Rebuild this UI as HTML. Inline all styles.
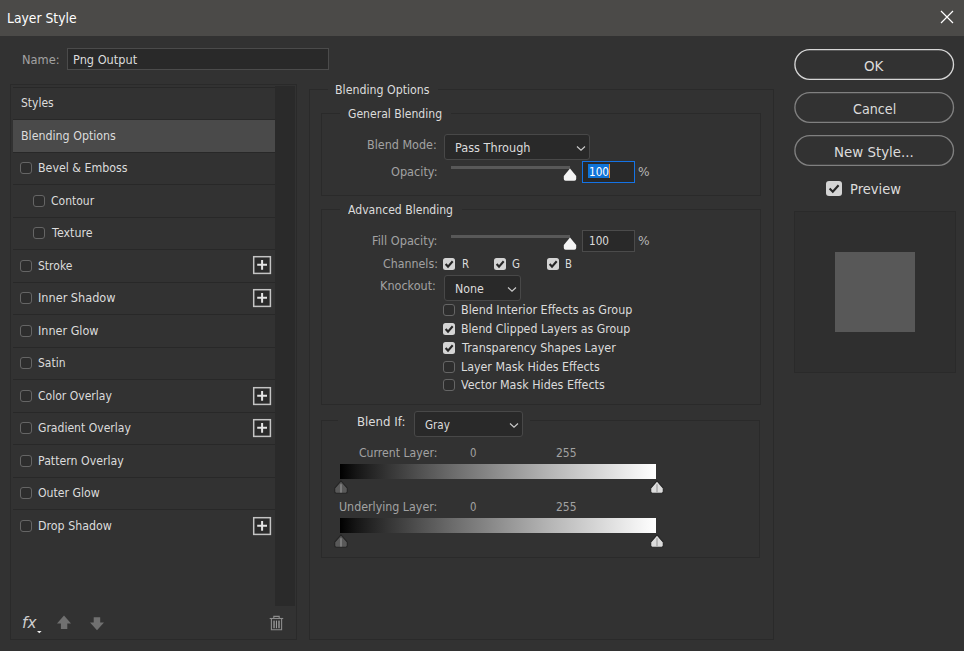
<!DOCTYPE html>
<html>
<head>
<meta charset="utf-8">
<title>Layer Style</title>
<style>
*{box-sizing:border-box;margin:0;padding:0}
html,body{width:964px;height:651px;overflow:hidden;background:#323232}
body{position:relative;font-family:"DejaVu Sans","Liberation Sans",sans-serif;font-size:13px;color:#dcdcdc}
.a{position:absolute}
.t{position:absolute;white-space:pre;line-height:16px;transform-origin:0 50%}
.ln{position:absolute;background:#282828}
.cb{position:absolute;width:12px;height:12px;border:1px solid #656565;border-radius:3px;background:#2d2d2d}
.cc{position:absolute;width:12px;height:12px;border-radius:2.5px;background:#d4d4d4}
.cc svg{position:absolute;left:0;top:0}
.sel{position:absolute;background:#292929;border:1px solid #484848;border-radius:3px}
.inp{position:absolute;background:#292929;border:1px solid #4b4b4b}
.fs{position:absolute;border:1px solid #2a2a2a}
.gap{position:absolute;height:3px;background:#323232}
.trk{position:absolute;height:3px;background:#585858}
.grad{position:absolute;left:340px;width:316px;height:15px;background:linear-gradient(to right,#000000 0%,#151515 5%,#252525 10%,#343434 15%,#424242 20%,#505050 25%,#5d5d5d 30%,#6a6a6a 35%,#767676 40%,#828282 45%,#8e8e8e 50%,#9a9a9a 55%,#a6a6a6 60%,#b2b2b2 65%,#bdbdbd 70%,#c8c8c8 75%,#d3d3d3 80%,#dedede 85%,#e9e9e9 90%,#f4f4f4 95%,#ffffff 100%)}
</style>
</head>
<body>
<!-- title bar -->
<div class="a" style="left:0;top:0;width:964px;height:36px;background:#4b4a48"></div>
<svg class="a" style="left:938px;top:8px" width="18" height="18" viewBox="0 0 18 18"><path d="M3 3 L15 15 M15 3 L3 15" stroke="#ffffff" stroke-width="1.2" fill="none"/></svg>

<!-- name field -->
<div class="inp" style="left:67px;top:48px;width:262px;height:22px;border-color:#4b4b4b"></div>

<!-- left panel -->
<div class="fs" style="left:10px;top:84px;width:287px;height:556px"></div>
<div class="a" style="left:275px;top:86px;width:20px;height:520px;background:#2a2a2a"></div>
<div class="a" style="left:13px;top:120px;width:262px;height:32px;background:#4a4a4a"></div>
<div class="ln" style="left:13px;top:87px;width:262px;height:1px"></div>
<div class="ln" style="left:13px;top:119px;width:262px;height:1px"></div>
<div class="ln" style="left:13px;top:152px;width:262px;height:1px"></div>
<div class="ln" style="left:13px;top:184px;width:262px;height:1px"></div>
<div class="ln" style="left:13px;top:217px;width:262px;height:1px"></div>
<div class="ln" style="left:13px;top:249px;width:262px;height:1px"></div>
<div class="ln" style="left:13px;top:282px;width:262px;height:1px"></div>
<div class="ln" style="left:13px;top:314px;width:262px;height:1px"></div>
<div class="ln" style="left:13px;top:347px;width:262px;height:1px"></div>
<div class="ln" style="left:13px;top:379px;width:262px;height:1px"></div>
<div class="ln" style="left:13px;top:412px;width:262px;height:1px"></div>
<div class="ln" style="left:13px;top:444px;width:262px;height:1px"></div>
<div class="ln" style="left:13px;top:477px;width:262px;height:1px"></div>
<div class="ln" style="left:13px;top:509px;width:262px;height:1px"></div>
<div class="cb" style="left:20px;top:161.5px"></div>
<div class="cb" style="left:33px;top:194.5px"></div>
<div class="cb" style="left:33px;top:226.5px"></div>
<div class="cb" style="left:20px;top:259.5px"></div>
<div class="cb" style="left:20px;top:291.5px"></div>
<div class="cb" style="left:20px;top:324.5px"></div>
<div class="cb" style="left:20px;top:356.5px"></div>
<div class="cb" style="left:20px;top:389.5px"></div>
<div class="cb" style="left:20px;top:421.5px"></div>
<div class="cb" style="left:20px;top:454.5px"></div>
<div class="cb" style="left:20px;top:486.5px"></div>
<div class="cb" style="left:20px;top:519.5px"></div>
<svg class="a" style="left:252px;top:255px" width="20" height="20" viewBox="0 0 20 20"><rect x="1.7" y="1.7" width="16.7" height="16.7" fill="#2b2b2b" stroke="#c4c4c4" stroke-width="1.5"/><path d="M5.2 9.8 H15 M10.1 4.9 V14.7" stroke="#e4e4e4" stroke-width="2" fill="none"/></svg>
<svg class="a" style="left:252px;top:288px" width="20" height="20" viewBox="0 0 20 20"><rect x="1.7" y="1.7" width="16.7" height="16.7" fill="#2b2b2b" stroke="#c4c4c4" stroke-width="1.5"/><path d="M5.2 9.8 H15 M10.1 4.9 V14.7" stroke="#e4e4e4" stroke-width="2" fill="none"/></svg>
<svg class="a" style="left:252px;top:385.5px" width="20" height="20" viewBox="0 0 20 20"><rect x="1.7" y="1.7" width="16.7" height="16.7" fill="#2b2b2b" stroke="#c4c4c4" stroke-width="1.5"/><path d="M5.2 9.8 H15 M10.1 4.9 V14.7" stroke="#e4e4e4" stroke-width="2" fill="none"/></svg>
<svg class="a" style="left:252px;top:418px" width="20" height="20" viewBox="0 0 20 20"><rect x="1.7" y="1.7" width="16.7" height="16.7" fill="#2b2b2b" stroke="#c4c4c4" stroke-width="1.5"/><path d="M5.2 9.8 H15 M10.1 4.9 V14.7" stroke="#e4e4e4" stroke-width="2" fill="none"/></svg>
<svg class="a" style="left:252px;top:515.5px" width="20" height="20" viewBox="0 0 20 20"><rect x="1.7" y="1.7" width="16.7" height="16.7" fill="#2b2b2b" stroke="#c4c4c4" stroke-width="1.5"/><path d="M5.2 9.8 H15 M10.1 4.9 V14.7" stroke="#e4e4e4" stroke-width="2" fill="none"/></svg>

<!-- bottom-left icons -->
<div class="t" style="left:22.3px;top:612.6px;font-size:15px;font-style:italic;color:#cecece;line-height:20px;transform:scaleX(1.02)">fx</div>
<svg class="a" style="left:36px;top:630px" width="8" height="5" viewBox="0 0 8 5"><path d="M1 1 H5.6 L3.3 3.2 Z" fill="#f0f0f0"/></svg>
<svg class="a" style="left:56px;top:614px" width="16" height="17" viewBox="0 0 16 17"><path d="M8 1.5 L15 9.4 H11.3 V15 H4.9 V9.4 H1 Z" fill="#707070"/></svg>
<svg class="a" style="left:89px;top:616px" width="16" height="16" viewBox="0 0 16 16"><path d="M4.7 1.2 H11.2 V6.4 H15 L8 14.2 L1 6.4 H4.7 Z" fill="#707070"/></svg>
<svg class="a" style="left:268px;top:614px" width="17" height="18" viewBox="0 0 17 18"><g fill="none" stroke="#8c8c8c" stroke-width="1.1"><path d="M1.7 4.5 H15.2"/><path d="M5.8 4.3 V2.4 H11.2 V4.3"/><path d="M3.4 5 V15.7 H13.6 V5"/></g><rect x="5.1" y="6.6" width="2" height="7.6" fill="#7a7a7a"/><rect x="8" y="6.6" width="1" height="7.6" fill="#9a9a9a"/><rect x="10" y="6.6" width="2" height="7.6" fill="#7a7a7a"/></svg>

<!-- center fieldsets -->
<div class="fs" style="left:309px;top:89px;width:465px;height:551px"></div>
<div class="gap" style="left:328px;top:88px;width:110px"></div>
<div class="fs" style="left:321px;top:113px;width:440px;height:83px"></div>
<div class="gap" style="left:340px;top:112px;width:111px"></div>
<div class="fs" style="left:321px;top:209px;width:440px;height:196px"></div>
<div class="gap" style="left:340px;top:208px;width:122px"></div>
<div class="fs" style="left:321px;top:420px;width:439px;height:138px"></div>
<div class="gap" style="left:338px;top:419px;width:192px"></div>

<!-- general blending -->
<div class="sel" style="left:444px;top:134px;width:146px;height:26px"></div>
<svg class="a" style="left:575px;top:144px" width="12" height="9" viewBox="0 0 12 9"><path d="M2 2.5 L6 6.2 L10 2.5" stroke="#cdcdcd" stroke-width="1.1" fill="none"/></svg>
<div class="trk" style="left:451px;top:166px;width:119px"></div>
<svg class="a" style="left:563px;top:168.4px" width="14" height="14" viewBox="0 0 14 14"><path d="M7 0.6 L13.2 8 V11 Q13.2 12.8 11.4 12.8 H2.6 Q0.8 12.8 0.8 11 V8 Z" fill="#f4f4f4"/></svg>
<div class="inp" style="left:582px;top:161px;width:53px;height:22px;border-color:#1473e6"></div>
<div class="a" style="left:588px;top:164px;width:21px;height:14px;background:#0f74d8"></div>
<div class="a" style="left:609px;top:164px;width:1px;height:14px;background:#f08a1e"></div>

<!-- advanced blending -->
<div class="trk" style="left:451px;top:235px;width:119px"></div>
<svg class="a" style="left:563px;top:237.4px" width="14" height="14" viewBox="0 0 14 14"><path d="M7 0.6 L13.2 8 V11 Q13.2 12.8 11.4 12.8 H2.6 Q0.8 12.8 0.8 11 V8 Z" fill="#f4f4f4"/></svg>
<div class="inp" style="left:582px;top:230px;width:53px;height:22px"></div>
<div class="cc" style="left:442.6px;top:257.8px"><svg width="12" height="12" viewBox="0 0 12 12"><path d="M2.6 6.1 L5 8.6 L9.7 3.3" stroke="#262626" stroke-width="2.1" fill="none"/></svg></div>
<div class="cc" style="left:493.8px;top:257.8px"><svg width="12" height="12" viewBox="0 0 12 12"><path d="M2.6 6.1 L5 8.6 L9.7 3.3" stroke="#262626" stroke-width="2.1" fill="none"/></svg></div>
<div class="cc" style="left:546.5px;top:257.8px"><svg width="12" height="12" viewBox="0 0 12 12"><path d="M2.6 6.1 L5 8.6 L9.7 3.3" stroke="#262626" stroke-width="2.1" fill="none"/></svg></div>
<div class="cc" style="left:442.8px;top:323.3px"><svg width="12" height="12" viewBox="0 0 12 12"><path d="M2.6 6.1 L5 8.6 L9.7 3.3" stroke="#262626" stroke-width="2.1" fill="none"/></svg></div>
<div class="cc" style="left:442.8px;top:342px"><svg width="12" height="12" viewBox="0 0 12 12"><path d="M2.6 6.1 L5 8.6 L9.7 3.3" stroke="#262626" stroke-width="2.1" fill="none"/></svg></div>
<div class="cb" style="left:442.8px;top:304px"></div>
<div class="cb" style="left:442.8px;top:361px"></div>
<div class="cb" style="left:442.8px;top:379px"></div>
<div class="sel" style="left:444px;top:275px;width:77px;height:26px"></div>
<svg class="a" style="left:506px;top:285px" width="12" height="9" viewBox="0 0 12 9"><path d="M2 2.5 L6 6.2 L10 2.5" stroke="#cdcdcd" stroke-width="1.1" fill="none"/></svg>

<!-- blend if -->
<div class="sel" style="left:414px;top:411px;width:109px;height:26px"></div>
<svg class="a" style="left:508px;top:421px" width="12" height="9" viewBox="0 0 12 9"><path d="M2 2.5 L6 6.2 L10 2.5" stroke="#cdcdcd" stroke-width="1.1" fill="none"/></svg>
<div class="grad" style="top:464px"></div>
<div class="grad" style="top:518px"></div>
<svg class="a" style="left:334px;top:479.6px" width="14" height="15" viewBox="0 0 14 15"><path d="M7 0.9 L13.3 8.2 V11.6 Q13.3 13.3 11.7 13.3 H2.3 Q0.7 13.3 0.7 11.6 V8.2 Z" fill="#595959" stroke="#242424" stroke-width="1.1"/><rect x="6.25" y="4.2" width="1.5" height="8.4" fill="#868686"/></svg>
<svg class="a" style="left:650.2px;top:479.7px" width="14" height="15" viewBox="0 0 14 15"><path d="M7 0.9 L13.3 8.2 V11.6 Q13.3 13.3 11.7 13.3 H2.3 Q0.7 13.3 0.7 11.6 V8.2 Z" fill="#dcdcdc" stroke="#242424" stroke-width="1.1"/><rect x="6.35" y="4.2" width="1.3" height="8.4" fill="#a4a4a4"/></svg>
<svg class="a" style="left:334px;top:533.6px" width="14" height="15" viewBox="0 0 14 15"><path d="M7 0.9 L13.3 8.2 V11.6 Q13.3 13.3 11.7 13.3 H2.3 Q0.7 13.3 0.7 11.6 V8.2 Z" fill="#595959" stroke="#242424" stroke-width="1.1"/><rect x="6.25" y="4.2" width="1.5" height="8.4" fill="#868686"/></svg>
<svg class="a" style="left:650.2px;top:533.7px" width="14" height="15" viewBox="0 0 14 15"><path d="M7 0.9 L13.3 8.2 V11.6 Q13.3 13.3 11.7 13.3 H2.3 Q0.7 13.3 0.7 11.6 V8.2 Z" fill="#dcdcdc" stroke="#242424" stroke-width="1.1"/><rect x="6.35" y="4.2" width="1.3" height="8.4" fill="#a4a4a4"/></svg>

<!-- right column -->
<svg class="a" style="left:790px;top:44px" width="170" height="128" viewBox="0 0 170 128"><g fill="none" stroke-width="1.35"><rect x="4.9" y="5.65" width="158.6" height="29.7" rx="14.85" stroke="#d6d6d6"/><rect x="4.9" y="48.65" width="158.6" height="29.7" rx="14.85" stroke="#808080"/><rect x="4.9" y="91.65" width="158.6" height="29.7" rx="14.85" stroke="#808080"/></g></svg>
<div class="a" style="left:826px;top:181px;width:16px;height:15px;border-radius:3px;background:#d4d4d4"></div>
<svg class="a" style="left:826px;top:181px" width="16" height="15" viewBox="0 0 16 15"><path d="M3.6 7.6 L6.8 10.8 L12.6 4.2" stroke="#262626" stroke-width="2.1" fill="none"/></svg>
<div class="fs" style="left:794px;top:211px;width:162px;height:162px;background:#2f2f2f"></div>
<div class="a" style="left:835px;top:252px;width:80px;height:80px;background:#585858"></div>

<div class="t" style="left:7.00px;top:9.89px;font-size:14.2px;color:#ffffff;transform:scaleX(0.8720)">Layer Style</div>
<div class="t" style="left:22.30px;top:51.90px;font-size:13px;color:#a2a2a2;transform:scaleX(0.8775)">Name:</div>
<div class="t" style="left:72.80px;top:51.90px;font-size:13px;color:#dcdcdc;transform:scaleX(0.8732)">Png Output</div>
<div class="t" style="left:21.10px;top:95.20px;font-size:13px;color:#dcdcdc;transform:scaleX(0.8292)">Styles</div>
<div class="t" style="left:21.10px;top:127.70px;font-size:13px;color:#dcdcdc;transform:scaleX(0.8517)">Blending Options</div>
<div class="t" style="left:38.20px;top:160.00px;font-size:13px;color:#dcdcdc;transform:scaleX(0.8502)">Bevel &amp; Emboss</div>
<div class="t" style="left:51.40px;top:192.70px;font-size:13px;color:#dcdcdc;transform:scaleX(0.8303)">Contour</div>
<div class="t" style="left:52.20px;top:225.00px;font-size:13px;color:#dcdcdc;transform:scaleX(0.8531)">Texture</div>
<div class="t" style="left:38.20px;top:257.80px;font-size:13px;color:#dcdcdc;transform:scaleX(0.8302)">Stroke</div>
<div class="t" style="left:37.50px;top:290.00px;font-size:13px;color:#dcdcdc;transform:scaleX(0.8699)">Inner Shadow</div>
<div class="t" style="left:37.50px;top:322.80px;font-size:13px;color:#dcdcdc;transform:scaleX(0.8635)">Inner Glow</div>
<div class="t" style="left:38.20px;top:355.00px;font-size:13px;color:#dcdcdc;transform:scaleX(0.8290)">Satin</div>
<div class="t" style="left:38.20px;top:387.70px;font-size:13px;color:#dcdcdc;transform:scaleX(0.8339)">Color Overlay</div>
<div class="t" style="left:38.20px;top:419.80px;font-size:13px;color:#dcdcdc;transform:scaleX(0.8349)">Gradient Overlay</div>
<div class="t" style="left:38.20px;top:452.70px;font-size:13px;color:#dcdcdc;transform:scaleX(0.8447)">Pattern Overlay</div>
<div class="t" style="left:38.20px;top:484.70px;font-size:13px;color:#dcdcdc;transform:scaleX(0.8414)">Outer Glow</div>
<div class="t" style="left:38.20px;top:517.70px;font-size:13px;color:#dcdcdc;transform:scaleX(0.8523)">Drop Shadow</div>
<div class="t" style="left:335.00px;top:82.00px;font-size:13px;color:#dcdcdc;transform:scaleX(0.8490)">Blending Options</div>
<div class="t" style="left:347.90px;top:105.90px;font-size:13px;color:#dcdcdc;transform:scaleX(0.8364)">General Blending</div>
<div class="t" style="left:367.30px;top:137.00px;font-size:13px;color:#a2a2a2;transform:scaleX(0.8610)">Blend Mode:</div>
<div class="t" style="left:454.90px;top:139.50px;font-size:13px;color:#dcdcdc;transform:scaleX(0.8695)">Pass Through</div>
<div class="t" style="left:390.50px;top:163.90px;font-size:13px;color:#a2a2a2;transform:scaleX(0.8702)">Opacity:</div>
<div class="t" style="left:588.70px;top:163.70px;font-size:13px;color:#ffffff;transform:scaleX(0.8055)">100</div>
<div class="t" style="left:637.50px;top:163.70px;font-size:13px;color:#b6b6b6;transform:scaleX(0.9386)">%</div>
<div class="t" style="left:347.90px;top:202.00px;font-size:13px;color:#dcdcdc;transform:scaleX(0.8369)">Advanced Blending</div>
<div class="t" style="left:372.30px;top:232.60px;font-size:13px;color:#a2a2a2;transform:scaleX(0.8727)">Fill Opacity:</div>
<div class="t" style="left:588.70px;top:232.60px;font-size:13px;color:#dcdcdc;transform:scaleX(0.8055)">100</div>
<div class="t" style="left:637.50px;top:232.60px;font-size:13px;color:#b6b6b6;transform:scaleX(0.9386)">%</div>
<div class="t" style="left:382.80px;top:255.80px;font-size:13px;color:#a2a2a2;transform:scaleX(0.8508)">Channels:</div>
<div class="t" style="left:461.90px;top:255.80px;font-size:13px;color:#dcdcdc;transform:scaleX(0.7800)">R</div>
<div class="t" style="left:512.30px;top:255.80px;font-size:13px;color:#dcdcdc;transform:scaleX(0.7938)">G</div>
<div class="t" style="left:565.30px;top:255.80px;font-size:13px;color:#dcdcdc;transform:scaleX(0.7800)">B</div>
<div class="t" style="left:380.30px;top:278.00px;font-size:13px;color:#a2a2a2;transform:scaleX(0.8652)">Knockout:</div>
<div class="t" style="left:454.90px;top:281.20px;font-size:13px;color:#dcdcdc;transform:scaleX(0.8520)">None</div>
<div class="t" style="left:461.20px;top:302.00px;font-size:13px;color:#dcdcdc;transform:scaleX(0.8587)">Blend Interior Effects as Group</div>
<div class="t" style="left:461.20px;top:321.10px;font-size:13px;color:#dcdcdc;transform:scaleX(0.8467)">Blend Clipped Layers as Group</div>
<div class="t" style="left:462.00px;top:339.90px;font-size:13px;color:#dcdcdc;transform:scaleX(0.8606)">Transparency Shapes Layer</div>
<div class="t" style="left:461.20px;top:358.60px;font-size:13px;color:#dcdcdc;transform:scaleX(0.8523)">Layer Mask Hides Effects</div>
<div class="t" style="left:461.20px;top:376.90px;font-size:13px;color:#dcdcdc;transform:scaleX(0.8558)">Vector Mask Hides Effects</div>
<div class="t" style="left:357.40px;top:414.20px;font-size:13px;color:#dcdcdc;transform:scaleX(0.9068)">Blend If:</div>
<div class="t" style="left:425.10px;top:416.70px;font-size:13px;color:#dcdcdc;transform:scaleX(0.8012)">Gray</div>
<div class="t" style="left:359.40px;top:444.90px;font-size:13px;color:#a2a2a2;transform:scaleX(0.8398)">Current Layer:</div>
<div class="t" style="left:469.80px;top:444.90px;font-size:13px;color:#a2a2a2;transform:scaleX(0.7800)">0</div>
<div class="t" style="left:556.30px;top:444.90px;font-size:13px;color:#a2a2a2;transform:scaleX(0.8297)">255</div>
<div class="t" style="left:338.70px;top:498.60px;font-size:13px;color:#a2a2a2;transform:scaleX(0.8526)">Underlying Layer:</div>
<div class="t" style="left:469.80px;top:498.60px;font-size:13px;color:#a2a2a2;transform:scaleX(0.7800)">0</div>
<div class="t" style="left:556.30px;top:498.60px;font-size:13px;color:#a2a2a2;transform:scaleX(0.8297)">255</div>
<div class="t" style="left:864.20px;top:58.09px;font-size:14.2px;color:#dcdcdc;transform:scaleX(0.9500)">OK</div>
<div class="t" style="left:853.00px;top:100.99px;font-size:14.2px;color:#dcdcdc;transform:scaleX(0.8985)">Cancel</div>
<div class="t" style="left:833.70px;top:143.89px;font-size:14.2px;color:#dcdcdc;transform:scaleX(0.9430)">New Style...</div>
<div class="t" style="left:850.20px;top:180.99px;font-size:14.2px;color:#dcdcdc;transform:scaleX(0.9233)">Preview</div>
</body>
</html>
